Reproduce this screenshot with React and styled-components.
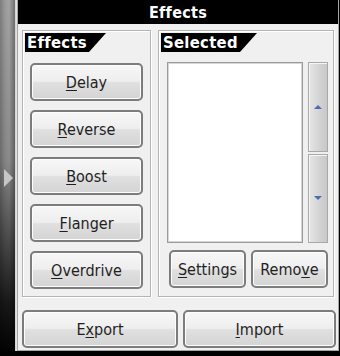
import React from "react";
import styled, { createGlobalStyle } from "styled-components";

const Global = createGlobalStyle`
  html, body { margin: 0; padding: 0; background: #000; }
  body {
    width: 340px;
    height: 356px;
    overflow: hidden;
    font-family: "DejaVu Sans Condensed", "DejaVu Sans", "Liberation Sans", sans-serif;
  }
`;

const Frame = styled.div`
  display: flex;
  width: 340px;
  height: 356px;
  background: #000;
`;

const SideStrip = styled.div`
  width: 15px;
  flex: none;
  display: flex;
  align-items: center;
  justify-content: center;
  background: linear-gradient(
    to right,
    #7c7c7c 0px,
    #9a9a9a 5px,
    #a4a4a4 9px,
    #6e6e6e 15px
  );
  position: relative;
  &::after {
    content: "";
    position: absolute;
    inset: 0;
    background: linear-gradient(to bottom, rgba(0,0,0,0) 0%, rgba(0,0,0,0.15) 45%, rgba(0,0,0,0.85) 85%, #000 100%);
  }
`;

const Arrow = styled.div`
  width: 0;
  height: 0;
  border-top: 9px solid transparent;
  border-bottom: 9px solid transparent;
  border-left: 9px solid #c6c6c6;
  margin-left: 2px;
  position: relative;
  z-index: 1;
`;

const Divider = styled.div`
  width: 2px;
  flex: none;
  background: linear-gradient(to right, #cfcfcf, #e8e8e8);
  height: 351px;
`;

const Panel = styled.div`
  width: 322px;
  height: 351px;
  box-sizing: border-box;
  background: #f0f0f0;
  border: 1px solid #a5a5a5;
  border-top: none;
  display: flex;
  flex-direction: column;
`;

const TitleBar = styled.div`
  height: 24px;
  background: #000;
  color: #fff;
  font-weight: bold;
  font-size: 16px;
  display: flex;
  align-items: center;
  justify-content: center;
  letter-spacing: 0.3px;
`;

const GroupRow = styled.div`
  display: flex;
  gap: 7px;
  margin: 6px 4px 0 4px;
  height: 267px;
`;

const Group = styled.div`
  width: ${(p) => p.$w}px;
  box-sizing: border-box;
  border: 1px solid #b4b4b4;
  box-shadow: inset 1px 1px 0 #fff, 1px 1px 0 #fff;
  padding: 2px;
  display: flex;
  flex-direction: column;
`;

const Tab = styled.div`
  width: ${(p) => p.$w}px;
  height: 19px;
  background: #000;
  color: #fff;
  font-weight: bold;
  font-size: 16.5px;
  line-height: 19px;
  padding-left: 2px;
  box-sizing: border-box;
  letter-spacing: 0.3px;
  clip-path: polygon(0 0, 100% 0, calc(100% - 17px) 100%, 0 100%);
`;

const ButtonColumn = styled.div`
  display: flex;
  flex-direction: column;
  gap: 9px;
  padding: 11px 5px 0 5px;
`;

const Button = styled.button`
  box-sizing: border-box;
  width: ${(p) => (p.$w ? `${p.$w}px` : "100%")};
  height: 38px;
  border: 2px solid #7c7c7c;
  border-radius: 5px;
  background: linear-gradient(to bottom, #f7f7f7 0%, #eeeeee 48%, #e0e0e0 52%, #d4d4d4 100%);
  box-shadow: inset 0 0 0 1px #fdfdfd;
  font-family: inherit;
  font-size: 16px;
  color: #1f1f1f;
  padding: 0;
  display: flex;
  align-items: center;
  justify-content: center;
  u { text-decoration-thickness: 1px; text-underline-offset: 2px; }
`;

const ListArea = styled.div`
  display: flex;
  gap: 5px;
  padding: 10px 3px 0 6px;
`;

const ListBox = styled.div`
  width: 138px;
  height: 181px;
  box-sizing: border-box;
  background: #fff;
  border: 1px solid #9a9a9a;
  box-shadow: inset 0 0 0 1px #d6d6d6;
`;

const ScrollBar = styled.div`
  width: 20px;
  height: 181px;
  box-sizing: border-box;
  display: flex;
  flex-direction: column;
  gap: 2px;
`;

const ScrollButton = styled.div`
  flex: 1;
  box-sizing: border-box;
  border: 1px solid #a8a8a8;
  background: linear-gradient(to right, #e6e6e6, #d2d2d2 60%, #c8c8c8);
  box-shadow: inset 1px 1px 0 #f6f6f6;
  display: flex;
  align-items: center;
  justify-content: center;
`;

const ScrollArrow = styled.div`
  width: 0;
  height: 0;
  border-left: 4px solid transparent;
  border-right: 4px solid transparent;
  ${(p) => (p.$down ? "border-top" : "border-bottom")}: 4px solid #4d6bb3;
`;

const ActionRow = styled.div`
  display: flex;
  gap: 5px;
  padding: 7px 3px 0 8px;
`;

const BottomRow = styled.div`
  display: flex;
  gap: 5px;
  margin: 13px 2px 0 4px;
`;

const Label = ({ text, k }) => {
  const i = text.indexOf(k);
  return (
    <span>
      {text.slice(0, i)}
      <u>{k}</u>
      {text.slice(i + 1)}
    </span>
  );
};

const effects = [
  ["Delay", "D"],
  ["Reverse", "R"],
  ["Boost", "B"],
  ["Flanger", "F"],
  ["Overdrive", "O"],
];

export default function App() {
  return (
    <>
      <Global />
      <Frame>
        <SideStrip>
          <Arrow />
        </SideStrip>
        <Divider />
        <Panel>
          <TitleBar>Effects</TitleBar>
          <GroupRow>
            <Group $w={129}>
              <Tab $w={81}>Effects</Tab>
              <ButtonColumn>
                {effects.map(([t, k]) => (
                  <Button key={t}>
                    <Label text={t} k={k} />
                  </Button>
                ))}
              </ButtonColumn>
            </Group>
            <Group $w={176}>
              <Tab $w={96}>Selected</Tab>
              <ListArea>
                <ListBox />
                <ScrollBar>
                  <ScrollButton>
                    <ScrollArrow />
                  </ScrollButton>
                  <ScrollButton>
                    <ScrollArrow $down />
                  </ScrollButton>
                </ScrollBar>
              </ListArea>
              <ActionRow>
                <Button $w={79}>
                  <Label text="Settings" k="S" />
                </Button>
                <Button $w={79}>
                  <Label text="Remove" k="v" />
                </Button>
              </ActionRow>
            </Group>
          </GroupRow>
          <BottomRow>
            <Button $w={156}>
              <Label text="Export" k="x" />
            </Button>
            <Button $w={153}>
              <Label text="Import" k="I" />
            </Button>
          </BottomRow>
        </Panel>
      </Frame>
    </>
  );
}
